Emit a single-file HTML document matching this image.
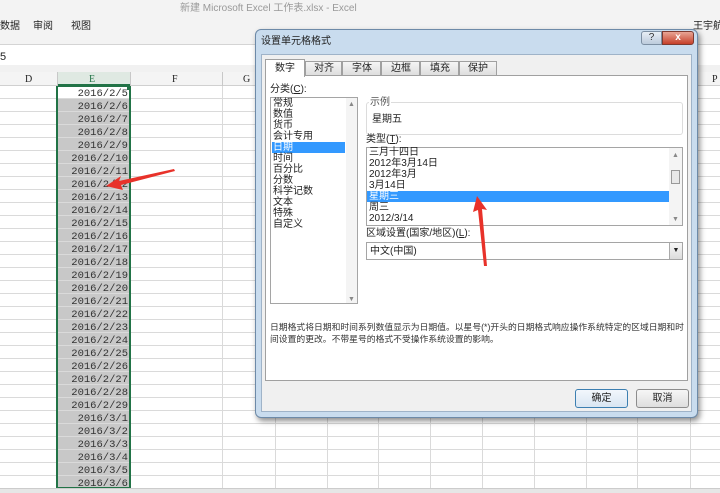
<!DOCTYPE html>
<html><head><meta charset="utf-8"><style>
*{margin:0;padding:0;box-sizing:border-box}
body{width:720px;height:493px;overflow:hidden;background:#fff;font-family:"Liberation Sans","Noto Sans CJK SC",sans-serif;font-size:10px;color:#222;position:relative}
.a{position:absolute}
.t{position:absolute;white-space:nowrap;line-height:11px}
</style></head><body>
<div class="a" style="left:0;top:0;width:720px;height:44px;background:#f3f3f3"></div>
<div class="t" style="left:180px;top:3px;color:#999;font-size:10px">新建 Microsoft Excel 工作表.xlsx - Excel</div>
<div class="t" style="left:0;top:21px">数据</div>
<div class="t" style="left:33px;top:21px">审阅</div>
<div class="t" style="left:71px;top:21px">视图</div>
<div class="t" style="left:693px;top:21px">王宇航</div>
<div class="a" style="left:0;top:44px;width:720px;height:1px;background:#d4d4d4"></div>
<div class="a" style="left:0;top:45px;width:720px;height:20px;background:#fff"></div>
<div class="t" style="left:0;top:52px;font-size:11px">5</div>
<div class="a" style="left:0;top:65px;width:720px;height:7px;background:#f1f1f1"></div>
<div class="a" style="left:0;top:72px;width:720px;height:14px;background:#f4f4f4;border-bottom:1px solid #d0d0d0"></div>
<div class="a" style="left:57px;top:72px;width:73px;height:14px;background:#dfe9e2;border-bottom:2px solid #217346"></div>
<div class="t" style="left:25px;top:74px;font-family:'Liberation Serif',serif">D</div>
<div class="t" style="left:89px;top:74px;color:#217346;font-family:'Liberation Serif',serif">E</div>
<div class="t" style="left:172px;top:74px;font-family:'Liberation Serif',serif">F</div>
<div class="t" style="left:243px;top:74px;font-family:'Liberation Serif',serif">G</div>
<div class="t" style="left:712px;top:74px;font-family:'Liberation Serif',serif">P</div>
<div class="a" style="left:57px;top:72px;width:1px;height:14px;background:#c8c8c8"></div>
<div class="a" style="left:130px;top:72px;width:1px;height:14px;background:#c8c8c8"></div>
<div class="a" style="left:222px;top:72px;width:1px;height:14px;background:#c8c8c8"></div>
<svg class="a" style="left:0;top:86px" width="720" height="402">
<g stroke="#dadada" stroke-width="1">
<line x1="57.5" y1="0" x2="57.5" y2="402"/><line x1="130.5" y1="0" x2="130.5" y2="402"/><line x1="222.5" y1="0" x2="222.5" y2="402"/>
<line x1="275.5" y1="0" x2="275.5" y2="402"/><line x1="327.5" y1="0" x2="327.5" y2="402"/><line x1="378.5" y1="0" x2="378.5" y2="402"/><line x1="430.5" y1="0" x2="430.5" y2="402"/><line x1="482.5" y1="0" x2="482.5" y2="402"/><line x1="534.5" y1="0" x2="534.5" y2="402"/><line x1="586.5" y1="0" x2="586.5" y2="402"/><line x1="637.5" y1="0" x2="637.5" y2="402"/><line x1="690.5" y1="0" x2="690.5" y2="402"/>
</g>
<rect x="57" y="13" width="73" height="389" fill="#c8c8c8"/>
<g stroke="#dadada">
<line x1="0" y1="12.5" x2="720" y2="12.5"/><line x1="0" y1="25.5" x2="720" y2="25.5"/><line x1="0" y1="38.5" x2="720" y2="38.5"/><line x1="0" y1="51.5" x2="720" y2="51.5"/><line x1="0" y1="64.5" x2="720" y2="64.5"/><line x1="0" y1="77.5" x2="720" y2="77.5"/><line x1="0" y1="90.5" x2="720" y2="90.5"/><line x1="0" y1="103.5" x2="720" y2="103.5"/><line x1="0" y1="116.5" x2="720" y2="116.5"/><line x1="0" y1="129.5" x2="720" y2="129.5"/><line x1="0" y1="142.5" x2="720" y2="142.5"/><line x1="0" y1="155.5" x2="720" y2="155.5"/><line x1="0" y1="168.5" x2="720" y2="168.5"/><line x1="0" y1="181.5" x2="720" y2="181.5"/><line x1="0" y1="194.5" x2="720" y2="194.5"/><line x1="0" y1="207.5" x2="720" y2="207.5"/><line x1="0" y1="220.5" x2="720" y2="220.5"/><line x1="0" y1="233.5" x2="720" y2="233.5"/><line x1="0" y1="246.5" x2="720" y2="246.5"/><line x1="0" y1="259.5" x2="720" y2="259.5"/><line x1="0" y1="272.5" x2="720" y2="272.5"/><line x1="0" y1="285.5" x2="720" y2="285.5"/><line x1="0" y1="298.5" x2="720" y2="298.5"/><line x1="0" y1="311.5" x2="720" y2="311.5"/><line x1="0" y1="324.5" x2="720" y2="324.5"/><line x1="0" y1="337.5" x2="720" y2="337.5"/><line x1="0" y1="350.5" x2="720" y2="350.5"/><line x1="0" y1="363.5" x2="720" y2="363.5"/><line x1="0" y1="376.5" x2="720" y2="376.5"/><line x1="0" y1="389.5" x2="720" y2="389.5"/>
</g>
<rect x="57" y="0" width="73" height="402" fill="none" stroke="#217346" stroke-width="2"/>
<rect x="127" y="0" width="4" height="4" fill="#217346"/>
<g font-family="Liberation Mono, monospace" font-size="10.5" fill="#333" text-anchor="end">
<text x="128" y="10">2016/2/5</text><text x="128" y="23">2016/2/6</text><text x="128" y="36">2016/2/7</text><text x="128" y="49">2016/2/8</text><text x="128" y="62">2016/2/9</text><text x="128" y="75">2016/2/10</text><text x="128" y="88">2016/2/11</text><text x="128" y="101">2016/2/12</text><text x="128" y="114">2016/2/13</text><text x="128" y="127">2016/2/14</text><text x="128" y="140">2016/2/15</text><text x="128" y="153">2016/2/16</text><text x="128" y="166">2016/2/17</text><text x="128" y="179">2016/2/18</text><text x="128" y="192">2016/2/19</text><text x="128" y="205">2016/2/20</text><text x="128" y="218">2016/2/21</text><text x="128" y="231">2016/2/22</text><text x="128" y="244">2016/2/23</text><text x="128" y="257">2016/2/24</text><text x="128" y="270">2016/2/25</text><text x="128" y="283">2016/2/26</text><text x="128" y="296">2016/2/27</text><text x="128" y="309">2016/2/28</text><text x="128" y="322">2016/2/29</text><text x="128" y="335">2016/3/1</text><text x="128" y="348">2016/3/2</text><text x="128" y="361">2016/3/3</text><text x="128" y="374">2016/3/4</text><text x="128" y="387">2016/3/5</text><text x="128" y="400">2016/3/6</text>
</g>
</svg>
<div class="a" style="left:0;top:488px;width:720px;height:5px;background:#e6e6e6;border-top:1px solid #ccc"></div>
<div class="a" style="left:255px;top:29px;width:443px;height:389px;background:#c9dcee;border:1px solid #6d8aa8;border-radius:6px;box-shadow:2px 3px 6px rgba(0,0,0,.45)"></div>
<div class="t" style="left:261px;top:36px">设置单元格格式</div>
<div class="a" style="left:641px;top:31px;width:21px;height:14px;background:linear-gradient(#e8eef5,#bccbdc);border:1px solid #7d8fa3;border-radius:3px 0 0 3px;color:#333;text-align:center;line-height:12px;font-size:10px">?</div>
<div class="a" style="left:662px;top:31px;width:32px;height:14px;background:linear-gradient(#e8a595,#c6402a);border:1px solid #7d3a30;border-radius:0 3px 3px 0;color:#fff;text-align:center;line-height:12px;font-size:10px;font-weight:bold">x</div>
<div class="a" style="left:261px;top:54px;width:431px;height:358px;background:#f0f0f0;border:1px solid #9fb3c8"></div>
<div class="a" style="left:265px;top:75px;width:423px;height:306px;background:#fff;border:1px solid #a0a0a0"></div>
<div class="a" style="left:305px;top:61px;width:37px;height:15px;background:linear-gradient(#f5f5f5,#dedede);border:1px solid #a0a0a0"></div>
<div class="a" style="left:342px;top:61px;width:39px;height:15px;background:linear-gradient(#f5f5f5,#dedede);border:1px solid #a0a0a0"></div>
<div class="a" style="left:381px;top:61px;width:39px;height:15px;background:linear-gradient(#f5f5f5,#dedede);border:1px solid #a0a0a0"></div>
<div class="a" style="left:420px;top:61px;width:39px;height:15px;background:linear-gradient(#f5f5f5,#dedede);border:1px solid #a0a0a0"></div>
<div class="a" style="left:459px;top:61px;width:38px;height:15px;background:linear-gradient(#f5f5f5,#dedede);border:1px solid #a0a0a0"></div>
<div class="a" style="left:265px;top:59px;width:40px;height:18px;background:#fff;border:1px solid #a0a0a0;border-bottom:none"></div>
<div class="t" style="left:275px;top:63px">数字</div>
<div class="t" style="left:314px;top:63px">对齐</div>
<div class="t" style="left:352px;top:63px">字体</div>
<div class="t" style="left:391px;top:63px">边框</div>
<div class="t" style="left:430px;top:63px">填充</div>
<div class="t" style="left:468px;top:63px">保护</div>
<div class="t" style="left:270px;top:84px">分类(<u>C</u>):</div>
<div class="a" style="left:270px;top:97px;width:88px;height:207px;border:1px solid #a5a5a5;background:#fff"></div>
<div class="a" style="left:346px;top:98px;width:11px;height:205px;background:#f4f4f4"></div>
<div class="t" style="left:348px;top:99px;font-size:7px;color:#888">▲</div>
<div class="t" style="left:348px;top:294px;font-size:7px;color:#888">▼</div>
<div class="a" style="left:272px;top:142px;width:73px;height:11px;background:#3399ff"></div>
<div class="t" style="left:273px;top:98px">常规</div>
<div class="t" style="left:273px;top:109px">数值</div>
<div class="t" style="left:273px;top:120px">货币</div>
<div class="t" style="left:273px;top:131px">会计专用</div>
<div class="t" style="left:273px;top:142px;color:#fff">日期</div>
<div class="t" style="left:273px;top:153px">时间</div>
<div class="t" style="left:273px;top:164px">百分比</div>
<div class="t" style="left:273px;top:175px">分数</div>
<div class="t" style="left:273px;top:186px">科学记数</div>
<div class="t" style="left:273px;top:197px">文本</div>
<div class="t" style="left:273px;top:208px">特殊</div>
<div class="t" style="left:273px;top:219px">自定义</div>
<div class="a" style="left:366px;top:102px;width:317px;height:33px;border:1px solid #dcdcdc;border-radius:3px"></div>
<div class="t" style="left:369px;top:97px;background:#fff;color:#555;padding:0 1px">示例</div>
<div class="t" style="left:372px;top:114px">星期五</div>
<div class="t" style="left:366px;top:134px">类型(<u>T</u>):</div>
<div class="a" style="left:366px;top:147px;width:317px;height:79px;border:1px solid #a5a5a5;background:#fff"></div>
<div class="a" style="left:669px;top:148px;width:13px;height:77px;background:#f4f4f4"></div>
<div class="a" style="left:671px;top:170px;width:9px;height:14px;background:#e8e8e8;border:1px solid #999"></div>
<div class="t" style="left:672px;top:150px;font-size:7px;color:#888">▲</div>
<div class="t" style="left:672px;top:214px;font-size:7px;color:#888">▼</div>
<div class="a" style="left:367px;top:191px;width:302px;height:11px;background:#3399ff"></div>
<div class="t" style="left:369px;top:147px">三月十四日</div>
<div class="t" style="left:369px;top:158px">2012年3月14日</div>
<div class="t" style="left:369px;top:169px">2012年3月</div>
<div class="t" style="left:369px;top:180px">3月14日</div>
<div class="t" style="left:369px;top:191px;color:#fff">星期三</div>
<div class="t" style="left:369px;top:202px">周三</div>
<div class="t" style="left:369px;top:213px">2012/3/14</div>
<div class="t" style="left:366px;top:228px">区域设置(国家/地区)(<u>L</u>):</div>
<div class="a" style="left:366px;top:242px;width:317px;height:18px;border:1px solid #a5a5a5;background:#fff"></div>
<div class="a" style="left:669px;top:243px;width:13px;height:16px;background:linear-gradient(#f7f7f7,#dcdcdc);border-left:1px solid #aaa;font-size:7px;text-align:center;line-height:16px">▼</div>
<div class="t" style="left:370px;top:246px">中文(中国)</div>
<div class="t" style="left:270px;top:321px;font-size:8.8px;line-height:12px;color:#333">日期格式将日期和时间系列数值显示为日期值。以星号(*)开头的日期格式响应操作系统特定的区域日期和时<br>间设置的更改。不带星号的格式不受操作系统设置的影响。</div>
<div class="a" style="left:575px;top:389px;width:53px;height:19px;background:linear-gradient(#f2f7fc,#d9e6f2);border:1px solid #3c7fb1;border-radius:3px;text-align:center;line-height:17px">确定</div>
<div class="a" style="left:636px;top:389px;width:53px;height:19px;background:linear-gradient(#f6f6f6,#dedede);border:1px solid #8c8c8c;border-radius:3px;text-align:center;line-height:17px">取消</div>
<svg class="a" style="left:0;top:0" width="720" height="493">
<polygon points="174,169 119,181 121,176 106,186 123,190 121,185 175,171" fill="#e8322a"/>
<polygon points="487,266 482,209 487,210 477,196 473,212 478,210 484,266" fill="#e8322a"/>
</svg>
</body></html>
